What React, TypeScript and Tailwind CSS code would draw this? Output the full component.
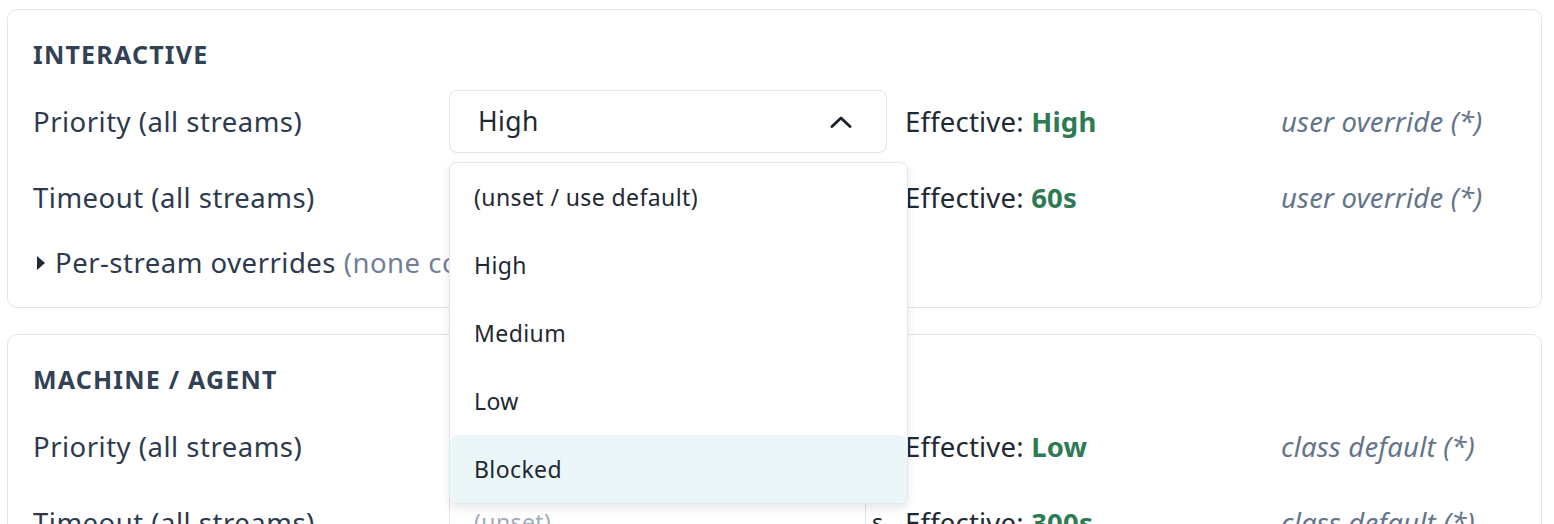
import React from "react";

const ROW = "grid grid-cols-[398px_438px_358px_1fr] gap-x-[18px] items-center h-[63px]";

function Chevron() {
  return (
    <svg width="22" height="12" viewBox="0 0 22 12" fill="none">
      <polyline points="2,10.5 11,2 20,10.5" stroke="#1a202c" strokeWidth="2.8" strokeLinecap="round" strokeLinejoin="round" />
    </svg>
  );
}

function Effective({ value }: { value: string }) {
  return (
    <div className="text-[27.5px] tracking-[0.2px] text-[#1f2933] whitespace-nowrap">
      Effective: <span className="font-bold text-[#2e7a53]">{value}</span>
    </div>
  );
}

function Source({ text }: { text: string }) {
  return <div className="text-[27.5px] tracking-[0.2px] italic text-[#64748b] whitespace-nowrap">{text}</div>;
}

function Label({ text }: { text: string }) {
  return <div className="text-[27.5px] tracking-[0.5px] text-[#2d3a4e] whitespace-nowrap">{text}</div>;
}

function Select({ value, open }: { value: string; open?: boolean }) {
  const items = ["(unset / use default)", "High", "Medium", "Low", "Blocked"];
  return (
    <div className="relative h-[63px]">
      <div className="h-[63px] rounded-[8px] border border-[#dfe3e8] bg-white pl-[28px] pr-[34px] flex items-center justify-between text-[26.5px] tracking-[0.4px] text-[#1f2933]">
        <span>{value}</span>
        <Chevron />
      </div>
      {open && (
        <div className="absolute left-0 top-[72px] z-30 w-[459px] rounded-[8px] border border-[#e3e7ec] bg-white shadow-[0_4px_10px_rgba(15,23,42,0.10)] flex flex-col">
          {items.map((it) => (
            <div
              key={it}
              className={
                "h-[68px] flex items-center pl-[24px] text-[23px] tracking-[0.4px] text-[#1f2933] rounded-[8px] " +
                (it === "Blocked" ? "bg-[#ebf6f8]" : "")
              }
            >
              {it}
            </div>
          ))}
        </div>
      )}
    </div>
  );
}

function TimeoutInput({ value }: { value: string }) {
  return (
    <div className="flex items-center gap-[6px] h-[63px]">
      <div className="flex-1 h-[63px] rounded-[8px] border border-[#dfe3e8] bg-white pl-[24px] flex items-center text-[23px] tracking-[0.4px]">
        {value ? <span className="text-[#1f2933]">{value}</span> : <span className="text-[#a0aab8]">(unset)</span>}
      </div>
      <span className="w-[15px] text-[23px] text-[#1f2933]">s</span>
    </div>
  );
}

function Card({
  title,
  priority,
  effPriority,
  timeout,
  effTimeout,
  source,
  open,
}: {
  title: string;
  priority: string;
  effPriority: string;
  timeout: string;
  effTimeout: string;
  source: string;
  open?: boolean;
}) {
  return (
    <div className="w-[1535px] rounded-[10px] border border-[#e2e6eb] bg-white px-[25px] pt-[26px] pb-[26px]">
      <div className="h-[36px] leading-[36px] text-[25px] font-bold uppercase tracking-[1.2px] text-[#334155]">{title}</div>
      <div className="mt-[18px] flex flex-col gap-[13px]">
        <div className={ROW}>
          <Label text="Priority (all streams)" />
          <Select value={priority} open={open} />
          <Effective value={effPriority} />
          <Source text={source} />
        </div>
        <div className={ROW}>
          <Label text="Timeout (all streams)" />
          <TimeoutInput value={timeout} />
          <Effective value={effTimeout} />
          <Source text={source} />
        </div>
      </div>
      <div className="mt-[16px] h-[36px] flex items-center text-[27.5px] tracking-[0.5px] text-[#2d3a4e] whitespace-nowrap">
        <svg width="9" height="14" viewBox="0 0 9 14" className="ml-[4px] mr-[9px]">
          <polygon points="0,0 8,7 0,14" fill="#1f2933" />
        </svg>
        <span>
          Per-stream overrides <span className="text-[#718096]">(none configured)</span>
        </span>
      </div>
    </div>
  );
}

export default function App() {
  return (
    <div className="h-[524px] overflow-hidden bg-white pl-[7px] pt-[9px] font-['Noto_Sans','DejaVu_Sans',sans-serif]">
      <div className="flex flex-col gap-[26px]">
        <div className="relative z-20">
          <Card
            title="Interactive"
            priority="High"
            effPriority="High"
            timeout="60"
            effTimeout="60s"
            source="user override (*)"
            open
          />
        </div>
        <div className="relative z-0">
          <Card
            title="Machine / Agent"
            priority="Low"
            effPriority="Low"
            timeout=""
            effTimeout="300s"
            source="class default (*)"
          />
        </div>
      </div>
    </div>
  );
}
